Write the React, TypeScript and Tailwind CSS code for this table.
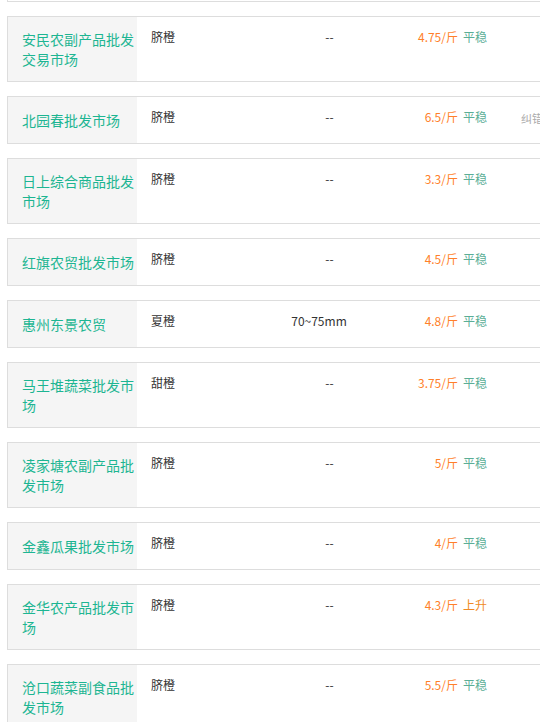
import React from "react"

type Row = {
  name: string
  kind: string
  spec: string
  price: string
  trend: string
  fix?: boolean
}

const rows: Row[] = [
  { name: "安民农副产品批发交易市场", kind: "脐橙", spec: "--", price: "4.75/斤", trend: "平稳" },
  { name: "北园春批发市场", kind: "脐橙", spec: "--", price: "6.5/斤", trend: "平稳", fix: true },
  { name: "日上综合商品批发市场", kind: "脐橙", spec: "--", price: "3.3/斤", trend: "平稳" },
  { name: "红旗农贸批发市场", kind: "脐橙", spec: "--", price: "4.5/斤", trend: "平稳" },
  { name: "惠州东景农贸", kind: "夏橙", spec: "70~75mm", price: "4.8/斤", trend: "平稳" },
  { name: "马王堆蔬菜批发市场", kind: "甜橙", spec: "--", price: "3.75/斤", trend: "平稳" },
  { name: "凌家塘农副产品批发市场", kind: "脐橙", spec: "--", price: "5/斤", trend: "平稳" },
  { name: "金鑫瓜果批发市场", kind: "脐橙", spec: "--", price: "4/斤", trend: "平稳" },
  { name: "金华农产品批发市场", kind: "脐橙", spec: "--", price: "4.3/斤", trend: "上升" },
  { name: "沧口蔬菜副食品批发市场", kind: "脐橙", spec: "--", price: "5.5/斤", trend: "平稳" },
]

function MarketRow({ row }: { row: Row }) {
  return (
    <div className="mt-[14px] flex min-h-[48px] w-[560px] border border-[#ddd] bg-white">
      <div className="flex w-[129px] shrink-0 items-center bg-[#f5f5f5] py-3 pl-[14px] pr-[2px] text-[14px] leading-[20px] text-[#1db592]">
        {row.name}
      </div>
      <div className="w-[120px] shrink-0 pl-[14px] pt-[11px] text-[12px] leading-[18px] text-[#333]">
        {row.kind}
      </div>
      <div className="w-[124px] shrink-0 pt-[11px] text-center text-[12px] leading-[18px] text-[#333]">
        {row.spec === "--" ? <span className="pl-[21px]">--</span> : row.spec}
      </div>
      <div className="flex w-[180px] shrink-0 whitespace-nowrap pt-[11px] text-[12px] leading-[18px]">
        <span className="w-[77px] text-right text-[#ff7f2a]">{row.price}</span>
        <span
          className={
            row.trend === "上升"
              ? "ml-[5px] text-[#f08a24]"
              : "ml-[5px] text-[#5aae96]"
          }
        >
          {row.trend}
        </span>
        {row.fix && (
          <span className="ml-[34px] pt-[1px] text-[11px] text-[#aaa]">纠错</span>
        )}
      </div>
    </div>
  )
}

export default function App() {
  return (
    <div
      className="h-[722px] w-[540px] overflow-hidden bg-white pl-[7px]"
      style={{ fontFamily: '"Noto Sans CJK SC", "Noto Sans", sans-serif' }}
    >
      <div className="h-[2px] w-[560px] border-b border-l border-[#ddd]" />
      {rows.map((r) => (
        <MarketRow key={r.name} row={r} />
      ))}
    </div>
  )
}
